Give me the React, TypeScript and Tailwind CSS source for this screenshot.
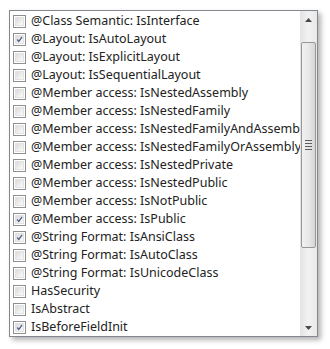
const items: { label: string; checked: boolean }[] = [
  { label: "@Class Semantic: IsInterface", checked: false },
  { label: "@Layout: IsAutoLayout", checked: true },
  { label: "@Layout: IsExplicitLayout", checked: false },
  { label: "@Layout: IsSequentialLayout", checked: false },
  { label: "@Member access: IsNestedAssembly", checked: false },
  { label: "@Member access: IsNestedFamily", checked: false },
  { label: "@Member access: IsNestedFamilyAndAssembly", checked: false },
  { label: "@Member access: IsNestedFamilyOrAssembly", checked: false },
  { label: "@Member access: IsNestedPrivate", checked: false },
  { label: "@Member access: IsNestedPublic", checked: false },
  { label: "@Member access: IsNotPublic", checked: false },
  { label: "@Member access: IsPublic", checked: true },
  { label: "@String Format: IsAnsiClass", checked: true },
  { label: "@String Format: IsAutoClass", checked: false },
  { label: "@String Format: IsUnicodeClass", checked: false },
  { label: "HasSecurity", checked: false },
  { label: "IsAbstract", checked: false },
  { label: "IsBeforeFieldInit", checked: true },
];

function Check({ checked }: { checked: boolean }) {
  return (
    <div className="w-[13px] h-[13px] shrink-0 border border-[#8e8f8f] bg-white p-px">
      <div className="w-full h-full bg-gradient-to-br from-[#dcdcdc] to-[#fbfbfb] border border-[#e2e2e2] flex items-center justify-center">
        {checked && (
          <svg width="9" height="9" viewBox="0 0 9 9">
            <path d="M1.5 4.5 L3.6 7 L7.8 1.2" fill="none" stroke="#4d6185" strokeWidth="1.6" />
          </svg>
        )}
      </div>
    </div>
  );
}

function Arrow({ up }: { up: boolean }) {
  return (
    <div className="h-[17px] flex items-center justify-center">
      <svg width="7" height="4" viewBox="0 0 7 4">
        <path d={up ? "M0 4 L3.5 0 L7 4 Z" : "M0 0 L3.5 4 L7 0 Z"} fill="#4a4a4a" />
      </svg>
    </div>
  );
}

export default function App() {
  return (
    <div className="w-[330px] h-[349px] bg-white pl-[9px] pt-[10px]">
      <div className="w-[309px] h-[327px] border border-[#828790] bg-white flex shadow-[3px_3px_5px_rgba(0,0,0,0.3)]">
        <div className="flex-1 overflow-hidden pt-px">
          {items.map((it) => (
            <div key={it.label} className="h-[18px] flex items-center pl-[3px] gap-[5px]">
              <Check checked={it.checked} />
              <span
                className="whitespace-nowrap text-[12.5px] text-[#222]"
                style={{ fontFamily: '"Noto Sans", "Liberation Sans", sans-serif' }}
              >
                {it.label}
              </span>
            </div>
          ))}
        </div>
        <div className="w-[17px] flex flex-col bg-gradient-to-r from-[#e3e3e3] via-[#f2f2f2] to-[#e8e8e8]">
          <Arrow up />
          <div className="h-[14px]" />
          <div className="h-[206px] mx-px rounded-[2px] border border-[#979797] bg-gradient-to-r from-[#f1f1f1] via-[#e8e8e8] to-[#d6d6d6] flex items-center justify-center">
            <div className="flex flex-col gap-[2px]">
              <div className="w-[7px] h-px bg-[#5c5c5c]" />
              <div className="w-[7px] h-px bg-[#5c5c5c]" />
              <div className="w-[7px] h-px bg-[#5c5c5c]" />
              <div className="w-[7px] h-px bg-[#5c5c5c]" />
            </div>
          </div>
          <div className="flex-1" />
          <Arrow up={false} />
        </div>
      </div>
    </div>
  );
}
